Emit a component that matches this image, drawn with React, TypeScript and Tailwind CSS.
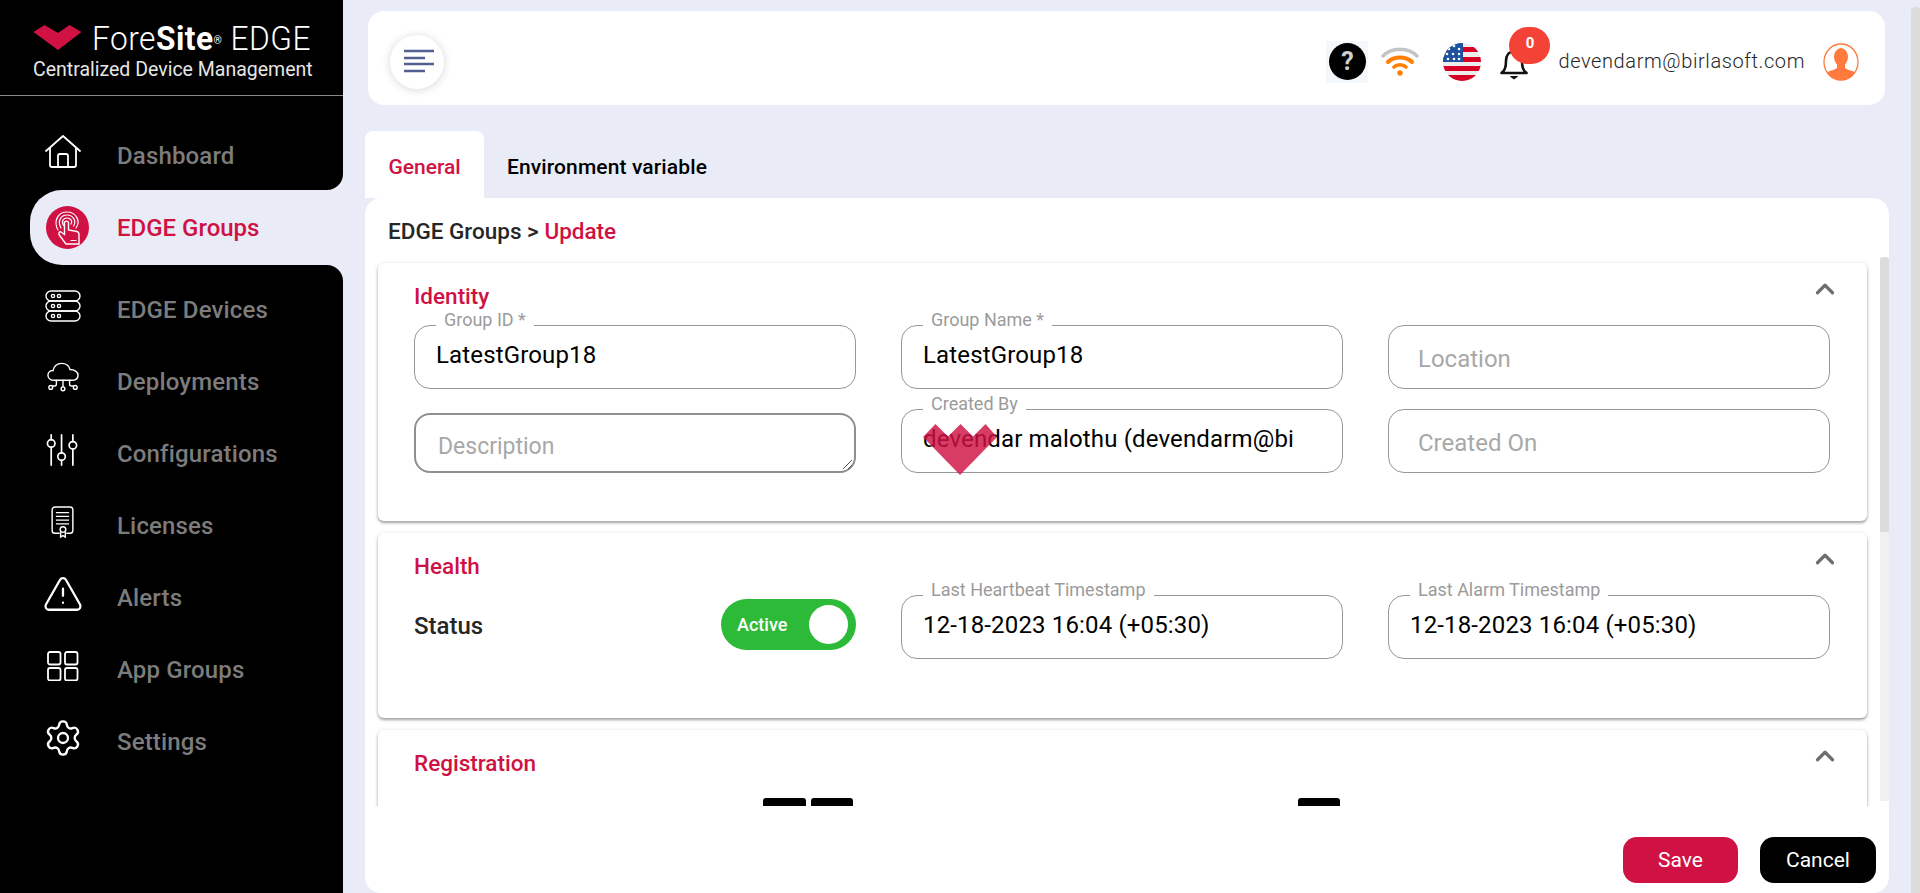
import React from 'react';
import { ChevronUp, Settings, TriangleAlert } from 'lucide-react';

const CRIMSON = 'text-[#cf1143]';

function HomeIcon() {
  return (
    <svg width="36" height="34" viewBox="0 0 36 34" fill="none" stroke="white" strokeWidth="1.8" strokeLinejoin="round" strokeLinecap="round">
      <path d="M1 16 L18 1 L35 16" />
      <path d="M5 13 V30 a2 2 0 0 0 2 2 H29 a2 2 0 0 0 2 -2 V13" />
      <path d="M13 32 V21 a2 2 0 0 1 2 -2 H21 a2 2 0 0 1 2 2 V32" />
    </svg>
  );
}

function ServerIcon() {
  return (
    <svg width="36" height="32" viewBox="0 0 36 32" fill="none" stroke="white" strokeWidth="1.4">
      <rect x="1" y="1" width="34" height="10" rx="5" />
      <rect x="1" y="11" width="34" height="10" rx="5" />
      <rect x="1" y="21" width="34" height="10" rx="5" />
      {[6, 16, 26].map((y) => (
        <g key={y}>
          <circle cx="8" cy={y} r="1.6" />
          <circle cx="14" cy={y} r="1.6" />
        </g>
      ))}
    </svg>
  );
}

function CloudIcon() {
  return (
    <svg width="32" height="31" viewBox="0 0 34 32" fill="none" stroke="white" strokeWidth="1.5" strokeLinecap="round">
      <path d="M8 19 C3 19 1 16 1 13.5 C1 10.5 3.5 8.5 6.5 8.5 C7.5 4 11 1 15.5 1 C20 1 23.5 3.5 24.5 7.5 C29 7.5 33 10 33 13.5 C33 17 30 19 26 19 Z" />
      <path d="M10 19 V23 a2 2 0 0 1 -2 2 H6" />
      <path d="M17 19 V26" />
      <path d="M24 19 V23 a2 2 0 0 0 2 2 H28" />
      <circle cx="4" cy="26.5" r="2" />
      <circle cx="17" cy="28" r="2" />
      <circle cx="30" cy="26.5" r="2" />
    </svg>
  );
}

function SlidersIcon() {
  return (
    <svg width="33" height="32" viewBox="0 0 34 34" fill="none" stroke="white" strokeWidth="1.8" strokeLinecap="round">
      <path d="M5 1 V6 M5 14 V33" />
      <circle cx="5" cy="10" r="4" />
      <path d="M16 1 V20 M16 28 V33" />
      <circle cx="16" cy="24" r="4" />
      <path d="M28 1 V8 M28 16 V33" />
      <circle cx="28" cy="12" r="4" />
    </svg>
  );
}

function LicenseIcon() {
  return (
    <svg width="23" height="32" viewBox="0 0 24 34" fill="none" stroke="white" strokeWidth="1.5">
      <path d="M9 29 H4 a3 3 0 0 1 -3 -3 V4 a3 3 0 0 1 3 -3 H20 a3 3 0 0 1 3 3 V26 a3 3 0 0 1 -3 3 H16" />
      <path d="M5 7 H19 M5 11 H19 M5 15 H19 M5 19 H19" strokeWidth="1.3" />
      <circle cx="12.5" cy="25" r="3" />
      <path d="M10 28 V33 L12.5 31.5 L15 33 V28" />
    </svg>
  );
}

function AppsIcon() {
  return (
    <svg width="32" height="30" viewBox="0 0 32 30" fill="none" stroke="white" strokeWidth="1.8">
      <rect x="1" y="1" width="12.5" height="12.5" rx="2" />
      <rect x="18" y="1" width="12.5" height="12.5" rx="2" />
      <rect x="1" y="17" width="12.5" height="12.5" rx="2" />
      <rect x="18" y="17" width="12.5" height="12.5" rx="2" />
    </svg>
  );
}

function TouchIcon() {
  return (
    <svg width="30" height="34" viewBox="0 0 30 34" fill="none" stroke="white" strokeLinecap="round" strokeWidth="1.2">
      <path d="M5 19 C0 10 5 1 14 1 C23 1 28 10 23 17" />
      <path d="M8 17 C4 10 8 4 14 4 C20 4 24 10 20.5 15" />
      <path d="M10.5 14.5 C8 10 10.5 7 14 7 C17.5 7 20 10 18 13" />
      <path d="M7 25 C5 23 6 20 8 21 L11.5 23.5 V12 C11.5 9.5 15.5 9.5 15.5 12 V19 L24 20.5 C25.5 21 26 22 26 23 V33 H13 Z" fill="#cf1143" strokeWidth="1.4" />
      <path d="M18 29.5 H23" />
    </svg>
  );
}

const NAV_BOTTOM = [
  { label: 'EDGE Devices', icon: <ServerIcon /> },
  { label: 'Deployments', icon: <CloudIcon /> },
  { label: 'Configurations', icon: <SlidersIcon /> },
  { label: 'Licenses', icon: <LicenseIcon /> },
  { label: 'Alerts', icon: <TriangleAlert size={42} color="white" strokeWidth={1.3} /> },
  { label: 'App Groups', icon: <AppsIcon /> },
  { label: 'Settings', icon: <Settings size={40} color="white" strokeWidth={1.4} /> },
];

function NavRow({ label, icon }: { label: string; icon: React.ReactNode }) {
  return (
    <div className="flex h-[72px] items-center">
      <div className="flex w-[117px] shrink-0 justify-center pb-[9px] pl-[8px]">{icon}</div>
      <span className="text-[24px] font-medium tracking-[0.15px] text-[#7c7c7c]">{label}</span>
    </div>
  );
}

function Sidebar() {
  return (
    <aside className="flex h-[893px] w-[343px] shrink-0 flex-col bg-[#e9ebf6]">
      <div className="h-[190px] rounded-br-[16px] bg-black">
        <div className="flex h-[96px] flex-col items-start border-b border-[#8a8a8a] pl-[33px] pt-[18px] text-white">
          <div className="flex h-[40px] items-center">
            <svg width="49" height="26" viewBox="0 0 48 26" className="mr-[10px]">
              <path d="M0 7 L11 0 L24.5 8 L36 0 L48 7 L24.5 25 Z" fill="#cf1143" />
            </svg>
            <span className="origin-left scale-x-[0.96] whitespace-nowrap text-[33px] font-light leading-none tracking-[0.5px]">
              Fore<span className="font-bold">Site</span>
              <sup className="text-[11px] font-normal">®</sup> EDGE
            </span>
          </div>
          <span className="whitespace-nowrap text-[19.5px] leading-[24px] text-[#e6e6e6]">Centralized Device Management</span>
        </div>
        <div className="-mb-[1px] pt-[24px]">
          <NavRow label="Dashboard" icon={<HomeIcon />} />
        </div>
      </div>
      <div className="bg-black">
        <div className="ml-[30px] flex h-[75px] items-center rounded-l-[32px] bg-[#e9ebf6]">
          <div className="ml-[16px] flex h-[43px] w-[43px] items-center justify-center rounded-full bg-[#cf1143]">
            <TouchIcon />
          </div>
          <span className={`ml-[28px] text-[24px] font-medium ${CRIMSON}`}>EDGE Groups</span>
        </div>
      </div>
      <div className="flex-1 rounded-tr-[16px] bg-black pt-[9px]">
        {NAV_BOTTOM.map((item) => (
          <NavRow key={item.label} label={item.label} icon={item.icon} />
        ))}
      </div>
    </aside>
  );
}

function TopBar() {
  return (
    <header className="ml-[25px] flex h-[94px] w-[1517px] items-center rounded-[16px] bg-white pl-[22px]">
      <div className="mt-[7px] flex h-[54px] w-[54px] items-center justify-center rounded-full bg-white shadow-[0_1px_10px_rgba(0,0,0,0.16)]">
        <svg width="30" height="24" viewBox="0 0 30 24" stroke="#545f91" strokeWidth="2.6" className="mb-[2px] ml-[3px]">
          <path d="M0 2 H30 M0 9 H21 M0 15 H30 M0 22 H21" />
        </svg>
      </div>
      <div className="ml-auto mt-[7px] flex items-center pr-[26px]">
        <div className="flex h-[42px] w-[42px] items-center justify-center bg-[#f4f8fb]">
          <div className="flex h-[37px] w-[37px] items-center justify-center rounded-full bg-black text-[25px] font-bold text-[#cfcfcf]">?</div>
        </div>
        <svg width="38" height="29" viewBox="0 0 38 29" fill="none" strokeLinecap="round" className="ml-[13px]">
          <path d="M2 9 C11 0 27 0 36 9" stroke="#c4c4c4" strokeWidth="3.4" />
          <path d="M7 15 C13 9 25 9 31 15" stroke="#ff7f00" strokeWidth="4" />
          <path d="M13 20 C16 17 22 17 25 20" stroke="#ff7f00" strokeWidth="3.6" />
          <circle cx="19" cy="26" r="2.7" fill="#ff7f00" />
        </svg>
        <svg width="38" height="38" viewBox="0 0 38 38" className="ml-[24px]">
          <defs>
            <clipPath id="flagClip">
              <circle cx="19" cy="19" r="19" />
            </clipPath>
          </defs>
          <g clipPath="url(#flagClip)">
            <rect width="38" height="38" fill="#ececec" />
            <rect y="4" width="38" height="5" fill="#d80027" />
            <rect y="14" width="38" height="5" fill="#d80027" />
            <rect y="23" width="38" height="5" fill="#d80027" />
            <rect y="32" width="38" height="6" fill="#d80027" />
            <rect width="20" height="19" fill="#1e50a0" />
            {[[6, 6], [11, 3], [16, 6], [4, 11], [10, 11], [16, 11], [5, 16], [11, 16], [16, 16]].map(([x, y]) => (
              <circle key={`${x}-${y}`} cx={x} cy={y} r="1.3" fill="white" />
            ))}
          </g>
        </svg>
        <div className="relative ml-[19px] h-[42px] w-[30px]">
          <svg width="28" height="30" viewBox="0 0 28 30" fill="none" stroke="#111" strokeWidth="2.6" className="absolute left-0 top-[9px]">
            <path d="M1.5 23 C5 21 6 18 6 11 C6 5 9 1.5 14 1.5 C19 1.5 22 5 22 11 C22 18 23 21 26.5 23 Z" strokeLinejoin="round" />
            <path d="M10.5 26.5 H17.5 L14 29 Z" fill="#111" strokeWidth="1" />
          </svg>
          <div className="absolute left-[9px] top-[-14px] flex h-[37px] w-[41px] items-start justify-center rounded-full bg-[#f44336] pt-[9px] text-[15px] font-bold leading-none text-white">0</div>
        </div>
        <span className="mb-[2px] ml-[28px] text-[20px] font-light tracking-[0.6px] text-[#262626]">devendarm@birlasoft.com</span>
        <svg width="36" height="38" viewBox="0 0 36 38" className="ml-[18px]">
          <defs>
            <clipPath id="avatarClip">
              <ellipse cx="18" cy="19" rx="17" ry="18" />
            </clipPath>
          </defs>
          <ellipse cx="18" cy="19" rx="17" ry="18" fill="white" stroke="#ff7a3c" strokeWidth="1.3" />
          <g clipPath="url(#avatarClip)" fill="#ff7a3c">
            <ellipse cx="18" cy="14" rx="7" ry="9" />
            <path d="M14 21 H22 V25 C26 28 32 28 36 31 V38 H0 V31 C4 28 10 28 14 25 Z" />
          </g>
        </svg>
      </div>
    </header>
  );
}

function Field({ label, value, placeholder }: { label?: string; value?: string; placeholder?: string }) {
  return (
    <div className="relative h-[64px]">
      <div className="h-full rounded-[16px] border border-[#979797] pl-[21px] pt-[14px] text-[24px] leading-[30px] tracking-[0.15px]">
        {value && <span className="block overflow-hidden whitespace-nowrap text-black">{value}</span>}
        {placeholder && <span className="block pl-[8px] pt-[4px] tracking-normal text-[#a8a8a8]">{placeholder}</span>}
      </div>
      {label && (
        <span className="absolute left-[22px] top-[-14px] bg-white px-[8px] text-[18px] leading-[18px] text-[#9b9b9b]">{label}</span>
      )}
    </div>
  );
}

function SectionCard({ title, height, children }: { title: string; height: string; children?: React.ReactNode }) {
  return (
    <section className={`relative shrink-0 rounded-[6px] bg-white pl-[36px] pr-[37px] shadow-[0_2px_3px_rgba(0,0,0,0.35),0_0_5px_rgba(0,0,0,0.08)] ${height}`}>
      <ChevronUp size={30} strokeWidth={2.6} color="#6e6e6e" className="absolute right-[27px] top-[11px]" />
      <h3 className={`pt-[18px] text-[22.5px] font-medium leading-[30px] ${CRIMSON}`}>{title}</h3>
      {children}
    </section>
  );
}

function GeneralPanel() {
  return (
    <div className="relative flex h-[695px] w-[1524px] flex-col rounded-[16px] bg-white">
      <p className="pl-[23px] pt-[21px] text-[22.5px] font-medium leading-[24px] text-[#262626]">
        EDGE Groups &gt; <span className={CRIMSON}>Update</span>
      </p>
      <div className="relative mt-[9px] flex h-[554px] overflow-hidden">
        <div className="flex w-[1515px] shrink-0 flex-col gap-[12px] px-[13px] pt-[11px]">
          <SectionCard title="Identity" height="h-[258px]">
            <div className="mt-[14px] grid grid-cols-3 gap-x-[45px] gap-y-[24px]">
              <Field label="Group ID *" value="LatestGroup18" />
              <Field label="Group Name *" value="LatestGroup18" />
              <Field placeholder="Location" />
              <div className="relative h-[60px] rounded-[16px] border-2 border-[#8f8f8f] pl-[22px] pt-[17px] text-[23px] leading-[30px] text-[#a8a8a8]">
                Description
                <svg width="12" height="12" viewBox="0 0 12 12" stroke="#555" className="absolute bottom-[1px] right-[1px]">
                  <path d="M2 11 L11 2 M7 11 L11 7" />
                </svg>
              </div>
              <div className="-mt-[4px]">
                <Field label="Created By" value="devendar malothu (devendarm@bi" />
              </div>
              <div className="-mt-[4px]">
                <Field placeholder="Created On" />
              </div>
            </div>
          </SectionCard>
          <SectionCard title="Health" height="h-[185px]">
            <div className="mt-[14px] grid grid-cols-3 gap-x-[45px]">
              <div className="flex items-center justify-between">
                <span className="pb-[2px] text-[24px] font-medium text-[#262626]">Status</span>
                <div className="-mt-[5px] flex h-[51px] w-[135px] items-center justify-between rounded-full bg-[#2dba38] pl-[16px] pr-[8px]">
                  <span className="text-[18px] font-medium text-white">Active</span>
                  <span className="h-[39px] w-[39px] rounded-full bg-white" />
                </div>
              </div>
              <Field label="Last Heartbeat Timestamp" value="12-18-2023 16:04 (+05:30)" />
              <Field label="Last Alarm Timestamp" value="12-18-2023 16:04 (+05:30)" />
            </div>
          </SectionCard>
          <SectionCard title="Registration" height="h-[120px]">
            <div className="absolute left-[385px] top-[68px] flex gap-[5px]">
              <span className="h-[20px] w-[43px] rounded-[3px] bg-black" />
              <span className="h-[20px] w-[42px] rounded-[3px] bg-black" />
            </div>
            <span className="absolute left-[920px] top-[68px] h-[20px] w-[42px] rounded-[3px] bg-black" />
          </SectionCard>
        </div>
        <div className="mt-[5px] h-[544px] w-[9px] bg-[#f0f0f0]">
          <div className="h-[275px] rounded-t-[4px] bg-[#dcdcdc]" />
        </div>
      </div>
      <div className="flex flex-1 items-start justify-end gap-[22px] pr-[13px] pt-[31px]">
        <button type="button" className="h-[46px] w-[115px] rounded-[14px] bg-[#cf1143] pt-[1px] text-[21px] text-white">Save</button>
        <button type="button" className="h-[46px] w-[116px] rounded-[14px] bg-black pt-[1px] text-[21px] text-white">Cancel</button>
      </div>
      {/* loading mark sits over the form */}
      <svg width="74" height="52" viewBox="0 0 74 52" className="absolute left-[558px] top-[226px]">
        <path d="M0 13 L12.5 0 L25 12.5 L37.5 0 L50 12.5 L62.5 0 L74 13 L37 51 Z" fill="#cf1143" fillOpacity="0.82" />
      </svg>
    </div>
  );
}

export default function App() {
  return (
    <div className="flex h-[893px] w-[1920px] overflow-hidden bg-[#e9ebf6] font-['Roboto',sans-serif]">
      <Sidebar />
      <main className="relative flex-1 pt-[11px]">
        <TopBar />
        <nav className="ml-[22px] mt-[26px] flex h-[67px] items-stretch">
          <div className={`flex w-[119px] items-start justify-center rounded-t-[8px] bg-white pt-[21px] text-[21px] font-medium leading-[30px] ${CRIMSON}`}>General</div>
          <div className="pl-[23px] pt-[21px] text-[21px] font-medium leading-[30px] tracking-[0.12px] text-black">Environment variable</div>
        </nav>
        <div className="ml-[22px]">
          <GeneralPanel />
        </div>
        <div className="absolute right-0 top-[7px] h-[886px] w-[9px] rounded-t-[4px] bg-[#dcdcdc]" />
      </main>
    </div>
  );
}
